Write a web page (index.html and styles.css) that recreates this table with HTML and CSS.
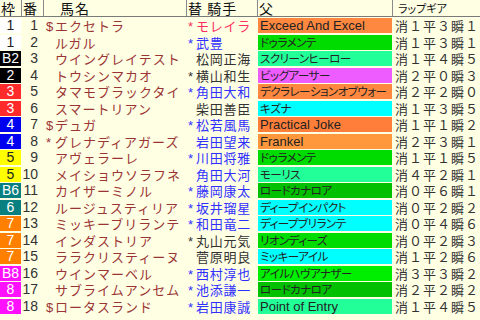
FILE: index.html
```html
<!DOCTYPE html>
<html lang="ja">
<head>
<meta charset="utf-8">
<title>出馬表</title>
<link rel="stylesheet" href="styles.css">
</head>
<body>
<div class="table">
  <div class="row head">
    <div class="h h-waku">枠</div>
    <div class="h h-ban">番</div>
    <div class="h h-name">馬名</div>
    <div class="h h-jockey">替 騎手</div>
    <div class="h h-sire">父</div>
    <div class="h h-lap">ラップギア</div>
  </div>

  <div class="row"><div class="waku w1">1</div><div class="ban">1</div><div class="name"><span class="pre">$</span>エクセトラ</div><div class="jockey red"><span class="pre">*</span>モレイラ</div><div class="sire s-or">Exceed And Excel</div><div class="lap">消１平３瞬１</div></div>
  <div class="row"><div class="waku w1">1</div><div class="ban">2</div><div class="name"><span class="pre"></span>ルガル</div><div class="jockey blue"><span class="pre">*</span>武豊</div><div class="sire s-gr kana">ドゥラメンテ</div><div class="lap">消１平３瞬１</div></div>
  <div class="row"><div class="waku w2">B2</div><div class="ban">3</div><div class="name"><span class="pre"></span>ウイングレイテスト</div><div class="jockey blk"><span class="pre"></span>松岡正海</div><div class="sire s-sp kana">スクリーンヒーロー</div><div class="lap">消１平４瞬５</div></div>
  <div class="row"><div class="waku w2">2</div><div class="ban">4</div><div class="name"><span class="pre"></span>トウシンマカオ</div><div class="jockey blk"><span class="pre">*</span>横山和生</div><div class="sire s-vi kana">ビッグアーサー</div><div class="lap">消２平０瞬３</div></div>
  <div class="row"><div class="waku w3">3</div><div class="ban">5</div><div class="name"><span class="pre"></span>タマモブラックタイ</div><div class="jockey blue"><span class="pre">*</span>角田大和</div><div class="sire s-or kana">デクラレーションオブウォー</div><div class="lap">消２平２瞬０</div></div>
  <div class="row"><div class="waku w3">3</div><div class="ban">6</div><div class="name"><span class="pre"></span>スマートリアン</div><div class="jockey blk"><span class="pre"></span>柴田善臣</div><div class="sire s-cy kana">キズナ</div><div class="lap">消１平３瞬５</div></div>
  <div class="row"><div class="waku w4">4</div><div class="ban">7</div><div class="name"><span class="pre">$</span>デュガ</div><div class="jockey blue"><span class="pre">*</span>松若風馬</div><div class="sire s-or2">Practical Joke</div><div class="lap">消１平１瞬２</div></div>
  <div class="row"><div class="waku w4">4</div><div class="ban">8</div><div class="name"><span class="pre">*</span>グレナディアガーズ</div><div class="jockey blue"><span class="pre"></span>岩田望来</div><div class="sire s-or3">Frankel</div><div class="lap">消２平３瞬１</div></div>
  <div class="row"><div class="waku w5">5</div><div class="ban">9</div><div class="name"><span class="pre"></span>アヴェラーレ</div><div class="jockey blue"><span class="pre">*</span>川田将雅</div><div class="sire s-gr kana">ドゥラメンテ</div><div class="lap">消１平１瞬５</div></div>
  <div class="row"><div class="waku w5">5</div><div class="ban">10</div><div class="name"><span class="pre"></span>メイショウソラフネ</div><div class="jockey blue"><span class="pre"></span>角田大河</div><div class="sire s-sp kana">モーリス</div><div class="lap">消４平２瞬１</div></div>
  <div class="row"><div class="waku w6">B6</div><div class="ban">11</div><div class="name"><span class="pre"></span>カイザーミノル</div><div class="jockey blue"><span class="pre">*</span>藤岡康太</div><div class="sire s-gr2 kana">ロードカナロア</div><div class="lap">消０平６瞬１</div></div>
  <div class="row"><div class="waku w6">6</div><div class="ban">12</div><div class="name"><span class="pre"></span>ルージュスティリア</div><div class="jockey blue"><span class="pre">*</span>坂井瑠星</div><div class="sire s-cy kana">ディープインパクト</div><div class="lap">消０平２瞬２</div></div>
  <div class="row"><div class="waku w7">7</div><div class="ban">13</div><div class="name"><span class="pre"></span>ミッキーブリランテ</div><div class="jockey blue"><span class="pre">*</span>和田竜二</div><div class="sire s-cy kana">ディープブリランテ</div><div class="lap">消０平４瞬６</div></div>
  <div class="row"><div class="waku w7">7</div><div class="ban">14</div><div class="name"><span class="pre"></span>インダストリア</div><div class="jockey blk"><span class="pre">*</span>丸山元気</div><div class="sire s-gr kana">リオンディーズ</div><div class="lap">消０平２瞬３</div></div>
  <div class="row"><div class="waku w7">7</div><div class="ban">15</div><div class="name"><span class="pre"></span>ララクリスティーヌ</div><div class="jockey blk"><span class="pre"></span>菅原明良</div><div class="sire s-cy kana">ミッキーアイル</div><div class="lap">消１平２瞬６</div></div>
  <div class="row"><div class="waku w8">B8</div><div class="ban">16</div><div class="name"><span class="pre"></span>ウインマーベル</div><div class="jockey blue"><span class="pre">*</span>西村淳也</div><div class="sire s-gr3 kana">アイルハヴアナザー</div><div class="lap">消３平３瞬２</div></div>
  <div class="row"><div class="waku w8">8</div><div class="ban">17</div><div class="name"><span class="pre"></span>サブライムアンセム</div><div class="jockey blue"><span class="pre">*</span>池添謙一</div><div class="sire s-gr2 kana">ロードカナロア</div><div class="lap">消２平２瞬２</div></div>
  <div class="row"><div class="waku w8">8</div><div class="ban">18</div><div class="name"><span class="pre">$</span>ロータスランド</div><div class="jockey blue"><span class="pre">*</span>岩田康誠</div><div class="sire s-sp">Point of Entry</div><div class="lap">消１平４瞬５</div></div>
</div>
</body>
</html>
```

FILE: styles.css
```css
html, body {
  margin: 0;
  padding: 0;
}
body {
  width: 480px;
  height: 320px;
  overflow: hidden;
  background: #FFFFE4;
  font-family: "Noto Sans CJK JP", sans-serif;
  font-size: 13px;
  color: #333;
}
.table {
  display: flex;
  flex-direction: column;
}
.row {
  display: grid;
  grid-template-columns: 22px 22px 143px 71px 135px 87px;
  height: 16.5px;
  line-height: 15px;
  white-space: nowrap;
}
.row.head {
  height: 16px;
  border-bottom: 1px solid #7a7a7a;
  line-height: 16px;
}
.h {
  border-right: 1px solid #8a8a8a;
  color: #111;
  font-size: 14px;
  overflow: hidden;
}
.h-waku { padding-left: 1px; }
.h-ban { padding-left: 1px; }
.h-name { padding-left: 16px; letter-spacing: 1px; }
.h-jockey { padding-left: 1px; letter-spacing: 1px; }
.h-sire { padding-left: 1px; }
.h-lap {
  border-right: none;
  font-size: 11px;
  padding-left: 5px;
  font-feature-settings: "palt";
}
.waku {
  margin-top: 1px;
  margin-right: 1px;
  height: 15px;
  text-align: center;
  color: #fff;
  font-family: "Liberation Sans", sans-serif;
  font-size: 14px;
}
.w1 { background: #ffffff; color: #222; }
.w2 { background: #000000; }
.w3 { background: #ff2a2a; }
.w4 { background: #0000f0; }
.w5 { background: #ffff00; color: #222; }
.w6 { background: #0a7f80; }
.w7 { background: #ff8000; }
.w8 { background: #ff10ff; }
.ban {
  margin-top: 1px;
  text-align: right;
  padding-right: 6px;
  font-family: "Liberation Sans", sans-serif;
  font-size: 14px;
  color: #333;
}
.name {
  margin-top: 1px;
  padding-left: 2px;
  color: #9b3535;
  letter-spacing: 1px;
  overflow: hidden;
}
.pre {
  display: inline-block;
  width: 9px;
  letter-spacing: 0;
  font-family: "Liberation Sans", sans-serif;
  font-size: 13px;
}
.jockey {
  margin-top: 1px;
  padding-left: 1px;
  letter-spacing: 0.75px;
}
.jockey .pre { width: 8px; }
.blue { color: #2f2fff; }
.red { color: #ff3060; }
.blk { color: #333; }
.sire {
  margin-top: 1px;
  height: 15px;
  padding-left: 2px;
  margin-right: 1px;
  color: #222;
  font-family: "Liberation Sans", "Noto Sans CJK JP", sans-serif;
  font-size: 13px;
  overflow: hidden;
}
.sire.kana {
  font-family: "Noto Sans CJK JP", sans-serif;
  font-feature-settings: "palt";
  font-size: 11.5px;
  letter-spacing: -0.5px;
}
.s-or { background: #ff8840; }
.s-or2 { background: #ff7f3a; }
.s-or3 { background: #ff983c; }
.s-gr { background: #00dc00; }
.s-gr2 { background: #00c000; }
.s-gr3 { background: #00ee00; }
.s-sp { background: #22ff99; }
.s-vi { background: #ee5cff; }
.s-cy { background: #00ffff; }
.lap {
  margin-top: 1px;
  padding-left: 2px;
  color: #333;
  font-size: 13px;
  letter-spacing: 1px;
}
```
